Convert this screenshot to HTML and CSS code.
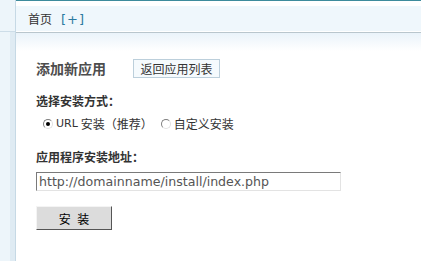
FILE: index.html
```html
<!DOCTYPE html>
<html>
<head>
<meta charset="utf-8">
<link rel="stylesheet" href="styles.css">
</head>
<body>
<div class="layout">
  <div class="side">
    <div class="side-top"></div>
    <div class="side-rest"></div>
  </div>
  <div class="main">
    <div class="topline"></div>
    <div class="bar"><span class="crumb">首页</span><a class="plus">[+]</a></div>
    <div class="bar-sep"></div>
    <div class="bar-fade"></div>
    <div class="content">
      <div class="title-row">
        <h3 class="title">添加新应用</h3>
        <button class="back-btn">返回应用列表</button>
      </div>
      <div class="label first">选择安装方式：</div>
      <div class="radio-row">
        <label class="opt"><input type="radio" name="m" class="radio" checked><span class="latin">URL</span> 安装（推荐）</label>
        <label class="opt"><input type="radio" name="m" class="radio">自定义安装</label>
      </div>
      <div class="label second">应用程序安装地址：</div>
      <input class="url" type="text" value="http://domainname/install/index.php">
      <button class="submit">安 装</button>
    </div>
  </div>
</div>
</body>
</html>
```
FILE: styles.css
```css
html, body {
  margin: 0;
  padding: 0;
  background: #fff;
}
body {
  font-family: "Noto Sans CJK SC", "DejaVu Sans", sans-serif;
  font-size: 12px;
  color: #333;
}
.layout {
  display: flex;
  height: 261px;
}
.side {
  width: 15px;
  border-right: 1px solid #c6d9e5;
  display: flex;
  flex-direction: column;
  background: linear-gradient(to right, #edf5fa 0, #edf5fa 10px, #dfebf3 10px, #dfebf3 15px);
}
.side-top {
  height: 31px;
  border-bottom: 1px solid #cddde8;
  background: #edf5fa;
}
.side-rest {
  flex: 1;
}
.main {
  flex: 1;
  display: flex;
  flex-direction: column;
}
.topline {
  height: 1px;
  background: #3d8b9c;
}
.bar {
  margin-top: 5px;
  height: 25px;
  line-height: 25px;
  background: #eff7fc;
  padding-left: 12px;
  color: #333;
}
.plus {
  font-family: "DejaVu Sans", sans-serif;
  font-size: 13px;
  color: #2a7aa0;
  margin-left: 9px;
  letter-spacing: 1px;
}
.bar-sep {
  height: 1px;
  margin-top: 1px;
  background: #b9c6cd;
}
.bar-fade {
  height: 18px;
  background: linear-gradient(#eaf3fa, #fff);
}
.content {
  padding-left: 20px;
  display: flex;
  flex-direction: column;
  align-items: flex-start;
}
.title-row {
  margin-top: 8px;
  display: flex;
  align-items: center;
  height: 19px;
}
.title {
  margin: 0;
  font-size: 14px;
  font-weight: bold;
  color: #4d4d4d;
  width: 97px;
  line-height: 19px;
}
.back-btn {
  height: 19px;
  width: 87px;
  padding: 0;
  border: 1px solid #bccfdb;
  background: #f5fafd;
  font-family: inherit;
  font-size: 12px;
  color: #333;
  line-height: 17px;
}
.label {
  font-weight: bold;
  color: #333;
  line-height: 16px;
}
.label.first {
  margin-top: 15px;
}
.label.second {
  margin-top: 17px;
}
.radio-row {
  margin-top: 7px;
  display: flex;
  line-height: 16px;
  padding-left: 7px;
  color: #333;
}
.opt {
  display: flex;
  align-items: center;
  margin-right: 8px;
}
.latin {
  font-family: "DejaVu Sans", sans-serif;
  font-size: 11px;
  margin-right: 3px;
}
.radio {
  appearance: none;
  -webkit-appearance: none;
  width: 10px;
  height: 10px;
  margin: 0 3px 0 0;
  border-radius: 50%;
  border: 1px solid;
  border-color: #7f7f7f #e2e2e2 #e2e2e2 #7f7f7f;
  background: #fff;
  position: relative;
}
.radio:checked::after {
  content: "";
  position: absolute;
  left: 2px;
  top: 2px;
  width: 4px;
  height: 4px;
  border-radius: 50%;
  background: #000;
}
.url {
  margin-top: 7px;
  box-sizing: border-box;
  width: 305px;
  height: 19px;
  padding: 0 0 0 2px;
  border: 1px solid;
  border-color: #7a7a7a #e3e3e3 #e3e3e3 #7a7a7a;
  font-family: "DejaVu Sans", sans-serif;
  font-size: 12.6px;
  color: #555;
  outline: none;
}
.submit {
  margin-top: 15px;
  box-sizing: border-box;
  width: 76px;
  height: 24px;
  padding: 0;
  border: 1px solid;
  border-color: #f4f4f4 #555 #555 #f4f4f4;
  background: #dcdcdc;
  font-family: inherit;
  font-size: 12px;
  color: #000;
  word-spacing: 4px;
}
```
